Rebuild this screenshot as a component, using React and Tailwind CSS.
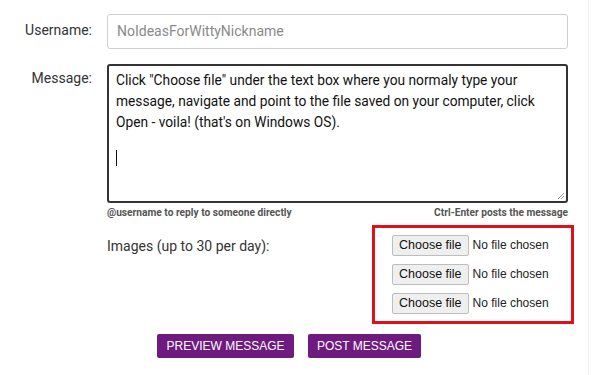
export default function App() {
  const fileRow = (
    <div className="flex items-center h-[20px]">
      <span className="h-[21px] px-[6px] flex items-center bg-[#efefef] border border-[#bdbdbd] rounded-[2px] text-[12.5px] text-[#111] font-['Liberation_Sans',Arial,sans-serif] whitespace-nowrap">
        Choose file
      </span>
      <span className="ml-[4px] text-[12px] text-[#222] font-['Liberation_Sans',Arial,sans-serif] whitespace-nowrap">No file chosen</span>
    </div>
  );
  return (
    <div className="w-[600px] h-[375px] bg-white overflow-hidden font-['Roboto',sans-serif]">
      <div className="w-[589px] h-full border-r border-[#f0f0f0] pt-[14px]">
        <div className="flex">
          <div className="w-[92px] text-right text-[14px] text-[#333] leading-[33px]">Username:</div>
          <div className="ml-[15px] w-[461px] h-[35px] border border-[#cfcfcf] rounded-[3px] flex items-center px-[9px] text-[14px] text-[#8a8a8a]">
            NoIdeasForWittyNickname
          </div>
        </div>
        <div className="flex mt-[15px]">
          <div className="w-[92px] text-right text-[14px] text-[#333] pt-[4px]">Message:</div>
          <div className="ml-[15px] w-[461px] h-[139px] border-2 border-[#333] rounded-[3px] px-[7px] pt-[4px] text-[13.75px] leading-[21px] text-[#111] relative whitespace-nowrap">
            <div>Click "Choose file" under the text box where you normaly type your</div>
            <div>message, navigate and point to the file saved on your computer, click</div>
            <div>Open - voila! (that's on Windows OS).</div>
            <div className="mt-[17px] w-[1px] h-[16px] bg-[#111]"></div>
            <svg className="absolute right-[1px] bottom-[1px]" width="9" height="9" viewBox="0 0 9 9">
              <path d="M8 2 L2 8 M8 5 L5 8" stroke="#999" strokeWidth="1" />
            </svg>
          </div>
        </div>
        <div className="ml-[107px] w-[461px] flex justify-between text-[10.2px] font-bold text-[#555] mt-[2px]">
          <span>@username to reply to someone directly</span>
          <span>Ctrl-Enter posts the message</span>
        </div>
        <div className="flex mt-[5px]">
          <div className="ml-[107px] w-[265px] pt-[11px] text-[14px] text-[#333]">Images (up to 30 per day):</div>
          <div className="w-[202px] h-[99px] border-[3px] border-[#e0101a] pl-[17px] pt-[7px] flex flex-col gap-[9px]">
            {fileRow}
            {fileRow}
            {fileRow}
          </div>
        </div>
        <div className="flex gap-[14px] ml-[157px] mt-[10px]">
          <button className="h-[24px] w-[137px] bg-[#6e1a7e] rounded-[2px] text-white text-[12px] font-['Liberation_Sans',Arial,sans-serif] whitespace-nowrap">PREVIEW MESSAGE</button>
          <button className="h-[24px] w-[113px] bg-[#6e1a7e] rounded-[2px] text-white text-[12px] font-['Liberation_Sans',Arial,sans-serif] whitespace-nowrap">POST MESSAGE</button>
        </div>
      </div>
    </div>
  );
}
